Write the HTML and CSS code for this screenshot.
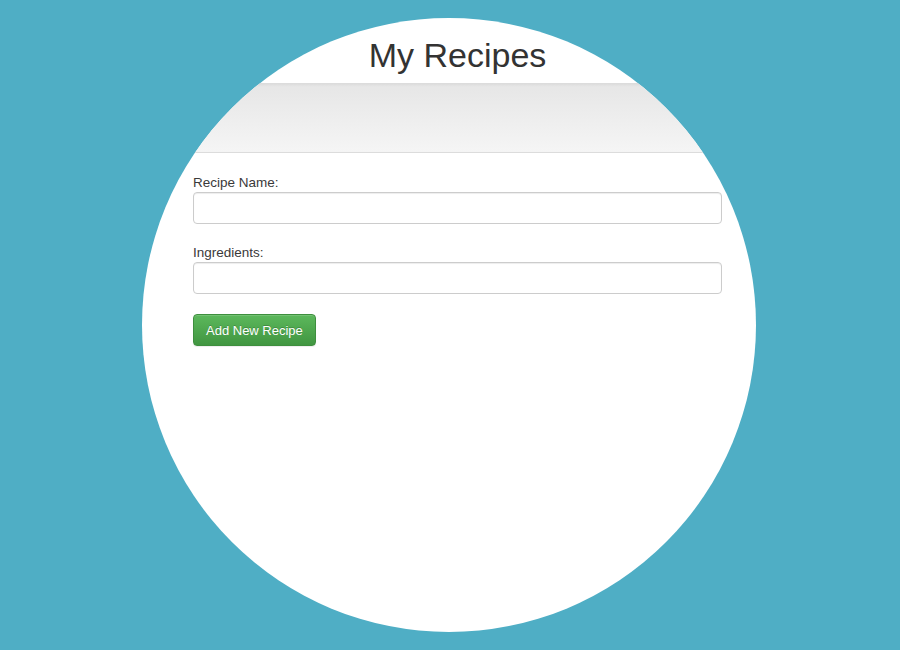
FILE: index.html
```html
<!DOCTYPE html>
<html lang="en">
<head>
    <meta charset="UTF-8">
    <title>My Recipes</title>
    <link rel="stylesheet" href="styles.css">
</head>
<body>
    <div class="lens">
        <div class="page">
            <h1 class="title">My Recipes</h1>
        </div>
        <div class="well"></div>
        <div class="page">
            <form class="recipe-form">
                <div class="form-group">
                    <label for="recipeName">Recipe Name:</label>
                    <input type="text" id="recipeName" class="form-control">
                </div>
                <div class="form-group">
                    <label for="ingredients">Ingredients:</label>
                    <input type="text" id="ingredients" class="form-control">
                </div>
                <button type="button" class="btn-success">Add New Recipe</button>
            </form>
        </div>
    </div>
</body>
</html>
```

FILE: styles.css
```css
body {
    margin: 0;
    height: 650px;
    background-color: #4faec5;
    font-family: "Liberation Sans", Arial, sans-serif;
    color: #333;
    display: flex;
    align-items: center;
    justify-content: center;
    overflow: hidden;
}
.lens {
    width: 614px;
    height: 614px;
    margin-left: -2px;
    border-radius: 50%;
    background-color: #fff;
    overflow: hidden;
}
.page {
    margin-left: 51px;
    width: 529px;
}
.title {
    margin: 19px 0 9px;
    font-size: 34px;
    font-weight: normal;
    line-height: 1.1;
    text-align: center;
}
.well {
    height: 68px;
    margin-bottom: 21px;
    border-top: 1px solid #dcdcdc;
    border-bottom: 1px solid #dcdcdc;
    background-image: linear-gradient(to bottom, #e6e6e6 0, #f5f5f5 100%);
    box-shadow: inset 0 1px 3px rgba(0, 0, 0, .05), 0 1px 0 rgba(255, 255, 255, .1);
}
.form-group {
    margin-bottom: 20px;
}
label {
    display: block;
    margin-bottom: 1px;
    font-size: 13.5px;
    line-height: 17px;
    color: #3a3a3a;
}
.form-control {
    display: block;
    box-sizing: border-box;
    width: 100%;
    height: 32px;
    padding: 6px 11px;
    border: 1px solid #ccc;
    border-radius: 4px;
    background-color: #fff;
    box-shadow: inset 0 1px 1px rgba(0, 0, 0, .075);
    font: 13px "Liberation Sans", Arial, sans-serif;
}
.btn-success {
    display: block;
    box-sizing: border-box;
    height: 32px;
    padding: 0 12px;
    border: 1px solid #3e8f3e;
    border-radius: 4px;
    background-image: linear-gradient(to bottom, #5cb85c 0, #419641 100%);
    box-shadow: inset 0 1px 0 rgba(255, 255, 255, .15), 0 1px 1px rgba(0, 0, 0, .075);
    color: #fff;
    text-shadow: 0 -1px 0 rgba(0, 0, 0, .2);
    font: 13px "Liberation Sans", Arial, sans-serif;
    cursor: pointer;
}
```
